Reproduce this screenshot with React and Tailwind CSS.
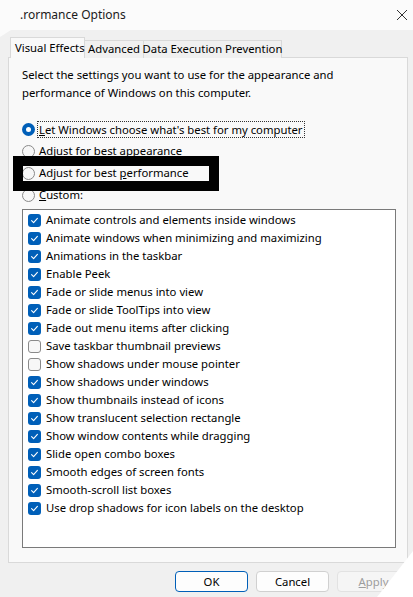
import React from "react";

const items = [
  ["Animate controls and elements inside windows", true],
  ["Animate windows when minimizing and maximizing", true],
  ["Animations in the taskbar", true],
  ["Enable Peek", true],
  ["Fade or slide menus into view", true],
  ["Fade or slide ToolTips into view", true],
  ["Fade out menu items after clicking", true],
  ["Save taskbar thumbnail previews", false],
  ["Show shadows under mouse pointer", false],
  ["Show shadows under windows", true],
  ["Show thumbnails instead of icons", true],
  ["Show translucent selection rectangle", true],
  ["Show window contents while dragging", true],
  ["Slide open combo boxes", true],
  ["Smooth edges of screen fonts", true],
  ["Smooth-scroll list boxes", true],
  ["Use drop shadows for icon labels on the desktop", true],
];

function Check({ checked }) {
  if (checked) {
    return (
      <span className="w-[13px] h-[13px] rounded-[3px] bg-[#005fb8] flex items-center justify-center shrink-0">
        <svg width="9" height="9" viewBox="0 0 9 9">
          <path d="M1.6 4.7 L3.6 6.6 L7.4 2.4" fill="none" stroke="white" strokeWidth="1.1" strokeLinecap="round" strokeLinejoin="round" />
        </svg>
      </span>
    );
  }
  return <span className="w-[13px] h-[13px] rounded-[3px] border border-[#8a8a8a] bg-[#f7f7f7] shrink-0" />;
}

function Radio({ selected }) {
  if (selected) {
    return (
      <span className="w-[13px] h-[13px] rounded-full bg-[#005fb8] flex items-center justify-center shrink-0">
        <span className="w-[5px] h-[5px] rounded-full bg-white" />
      </span>
    );
  }
  return <span className="w-[13px] h-[13px] rounded-full border border-[#8a8a8a] bg-[#f7f7f7] shrink-0" />;
}

export default function App() {
  return (
    <div
      className="relative w-[413px] h-[597px] overflow-hidden bg-[#f0f0f0] text-[11.3px] text-black"
      style={{ fontFamily: '"Segoe UI", "Noto Sans", "Open Sans", sans-serif' }}
    >
      {/* title bar */}
      <div className="h-[30px] bg-[#fbfbfb] flex items-center justify-between pl-[20px] pr-[4px]">
        <span className="text-[12px] text-[#1a1a1a] leading-none">.rormance Options</span>
        <svg width="12" height="12" viewBox="0 0 12 12" className="mr-[1px]">
          <path d="M1 1 L11 11 M11 1 L1 11" stroke="#333" strokeWidth="1" />
        </svg>
      </div>
      <svg className="absolute left-0 top-[30px]" width="11" height="8" viewBox="0 0 11 8">
        <polygon points="0,0 11,0 0,7" fill="#fbfbfb" />
      </svg>

      {/* tabs */}
      <div className="ml-[10px] mt-[7px] flex items-end h-[21px] relative z-10 whitespace-nowrap">
        <div className="h-[21px] w-[75px] border border-b-0 border-[#d9d9d9] bg-[#f9f9f9] flex items-start pl-[4px] pt-[2px]">
          <span>Visual Effects</span>
        </div>
        <div className="h-[18px] w-[59px] border border-l-0 border-b-0 border-[#d9d9d9] bg-[#f0f0f0] flex items-center justify-center">
          Advanced
        </div>
        <div className="h-[18px] w-[138px] border border-l-0 border-b-0 border-[#d9d9d9] bg-[#f0f0f0] flex items-center justify-center">
          Data Execution Prevention
        </div>
      </div>

      {/* panel */}
      <div className="relative ml-[8px] mr-[5px] -mt-[1px] h-[506px] border border-[#d9d9d9] bg-[#f9f9f9] pl-[13px] pr-[12px] pt-[8px]">
        <p className="leading-[18px] w-[330px]">
          Select the settings you want to use for the appearance and performance of Windows on this computer.
        </p>

        <div className="mt-[16px] flex flex-col">
          <div className="h-[22px] flex items-center gap-[2px]">
            <Radio selected />
            <span className="border border-dotted border-[#333] px-[1px] leading-[15px]">
              <u>L</u>et Windows choose what's best for my computer
            </span>
          </div>
          <div className="h-[22px] flex items-center gap-[3px]">
            <Radio />
            <span className="pl-[1px]">Adjust for <u>b</u>est appearance</span>
          </div>
          <div className="h-[22px] flex items-center gap-[3px]">
            <Radio />
            <span className="pl-[1px]">Adjust for best <u>p</u>erformance</span>
          </div>
          <div className="h-[23px] flex items-center gap-[3px]">
            <Radio />
            <span className="pl-[1px]"><u>C</u>ustom:</span>
          </div>
        </div>

        <div className="mt-[2px] w-[374px] h-[339px] border border-[#7a7a7a] bg-white pt-[1px] pl-[5px]">
          {items.map(([label, checked]) => (
            <div key={label} className="h-[18px] flex items-center gap-[5px]">
              <Check checked={checked} />
              <span className="whitespace-nowrap">{label}</span>
            </div>
          ))}
        </div>

        {/* black annotation frame */}
        <div className="absolute left-[4px] top-[98px] w-[206px] h-[35px] border-[10px] border-black" />
      </div>

      {/* buttons */}
      <div className="flex gap-[8px] ml-[175px] mt-[8px]">
        <button className="w-[73px] h-[21px] rounded-[4px] border border-[#005fb8] bg-[#fdfdfd] leading-none">
          OK
        </button>
        <button className="w-[73px] h-[21px] rounded-[4px] border border-[#d0d0d0] bg-[#fdfdfd] leading-none">
          Cancel
        </button>
        <button className="w-[73px] h-[21px] rounded-[4px] border border-[#e2e2e2] bg-[#f5f5f5] text-[#9d9d9d] leading-none">
          <u>A</u>pply
        </button>
      </div>

      <svg className="absolute right-0 bottom-0" width="36" height="46" viewBox="0 0 36 46">
        <polygon points="36,0 36,46 0,46" fill="#ffffff" />
      </svg>
    </div>
  );
}
